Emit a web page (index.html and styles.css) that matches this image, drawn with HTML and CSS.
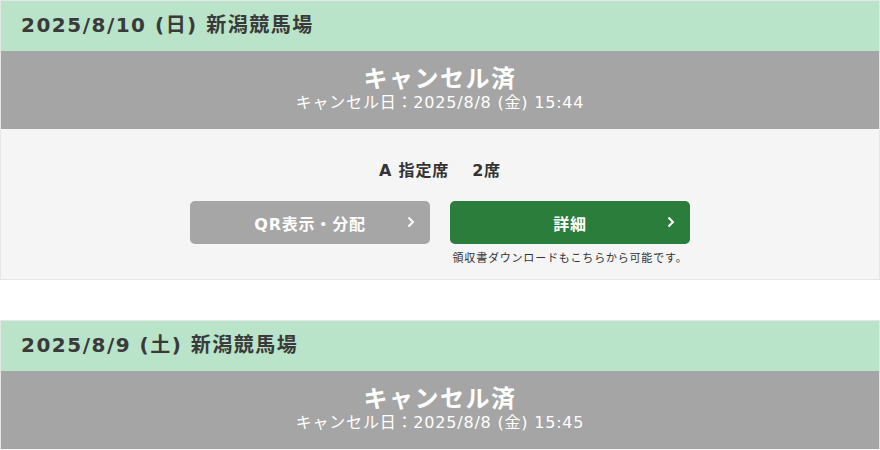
FILE: index.html
```html
<!DOCTYPE html>
<html lang="ja">
<head>
<meta charset="utf-8">
<link rel="stylesheet" href="styles.css">
</head>
<body>
<div class="list">
  <section class="card">
    <h2 class="card-head">2025/8/10 (日) 新潟競馬場</h2>
    <div class="status">
      <div class="status-title">キャンセル済</div>
      <div class="status-sub">キャンセル日：2025/8/8 (金) 15:44</div>
    </div>
    <div class="card-body">
      <div class="seat">A 指定席　 2席</div>
      <div class="actions">
        <div class="col">
          <a class="btn btn-gray">QR表示・分配<svg class="chev" viewBox="0 0 8 12" width="8" height="12"><path d="M1.5 1.5 L6 6 L1.5 10.5" fill="none" stroke="#fff" stroke-width="2"/></svg></a>
        </div>
        <div class="col">
          <a class="btn btn-green">詳細<svg class="chev" viewBox="0 0 8 12" width="8" height="12"><path d="M1.5 1.5 L6 6 L1.5 10.5" fill="none" stroke="#fff" stroke-width="2"/></svg></a>
          <p class="note">領収書ダウンロードもこちらから可能です。</p>
        </div>
      </div>
    </div>
  </section>
  <section class="card">
    <h2 class="card-head">2025/8/9 (土) 新潟競馬場</h2>
    <div class="status">
      <div class="status-title">キャンセル済</div>
      <div class="status-sub">キャンセル日：2025/8/8 (金) 15:45</div>
    </div>
    <div class="card-body">
      <div class="seat">A 指定席　 2席</div>
    </div>
  </section>
</div>
</body>
</html>
```
FILE: styles.css
```css
html, body {
  margin: 0;
  padding: 0;
  background: #fff;
}
body {
  font-family: "DejaVu Sans", "Noto Sans CJK JP", sans-serif;
  color: #333;
  letter-spacing: 0.05em;
}
.list {
  display: flex;
  flex-direction: column;
  gap: 40px;
}
.card {
  border: 1px solid #e6e6e6;
  background: #f5f5f5;
}
.card-head {
  margin: 0;
  box-sizing: border-box;
  height: 50px;
  padding: 11px 0 0 20px;
  background: #b9e4c9;
  font-size: 20px;
  line-height: 26px;
  letter-spacing: 1.5px;
  font-weight: bold;
  color: #3a3a3a;
}
.status {
  height: 78px;
  background: #a5a5a5;
  color: #fff;
  display: flex;
  flex-direction: column;
  align-items: center;
  justify-content: center;
}
.status-title {
  font-size: 24px;
  letter-spacing: 1.5px;
  font-weight: bold;
  line-height: 28px;
  margin-top: -2px;
}
.status-sub {
  font-size: 16px;
  line-height: 20px;
}
.card-body {
  height: 150px;
  display: flex;
  flex-direction: column;
  align-items: center;
}
.seat {
  margin-top: 31px;
  font-size: 16px;
  font-weight: bold;
  line-height: 22px;
}
.actions {
  margin-top: 19px;
  display: flex;
  gap: 20px;
}
.col {
  width: 240px;
  display: flex;
  flex-direction: column;
  align-items: center;
}
.btn {
  position: relative;
  box-sizing: border-box;
  width: 240px;
  height: 43px;
  border-radius: 5px;
  display: flex;
  align-items: center;
  justify-content: center;
  color: #fff;
  font-size: 16px;
  font-weight: bold;
  text-decoration: none;
}
.btn-gray { background: #a6a6a6; }
.btn-green { background: #2a7d3a; }
.chev {
  position: absolute;
  right: 15px;
  top: 15px;
}
.note {
  margin: 7px 0 0;
  font-size: 11px;
  line-height: 16px;
  color: #333;
}
```
